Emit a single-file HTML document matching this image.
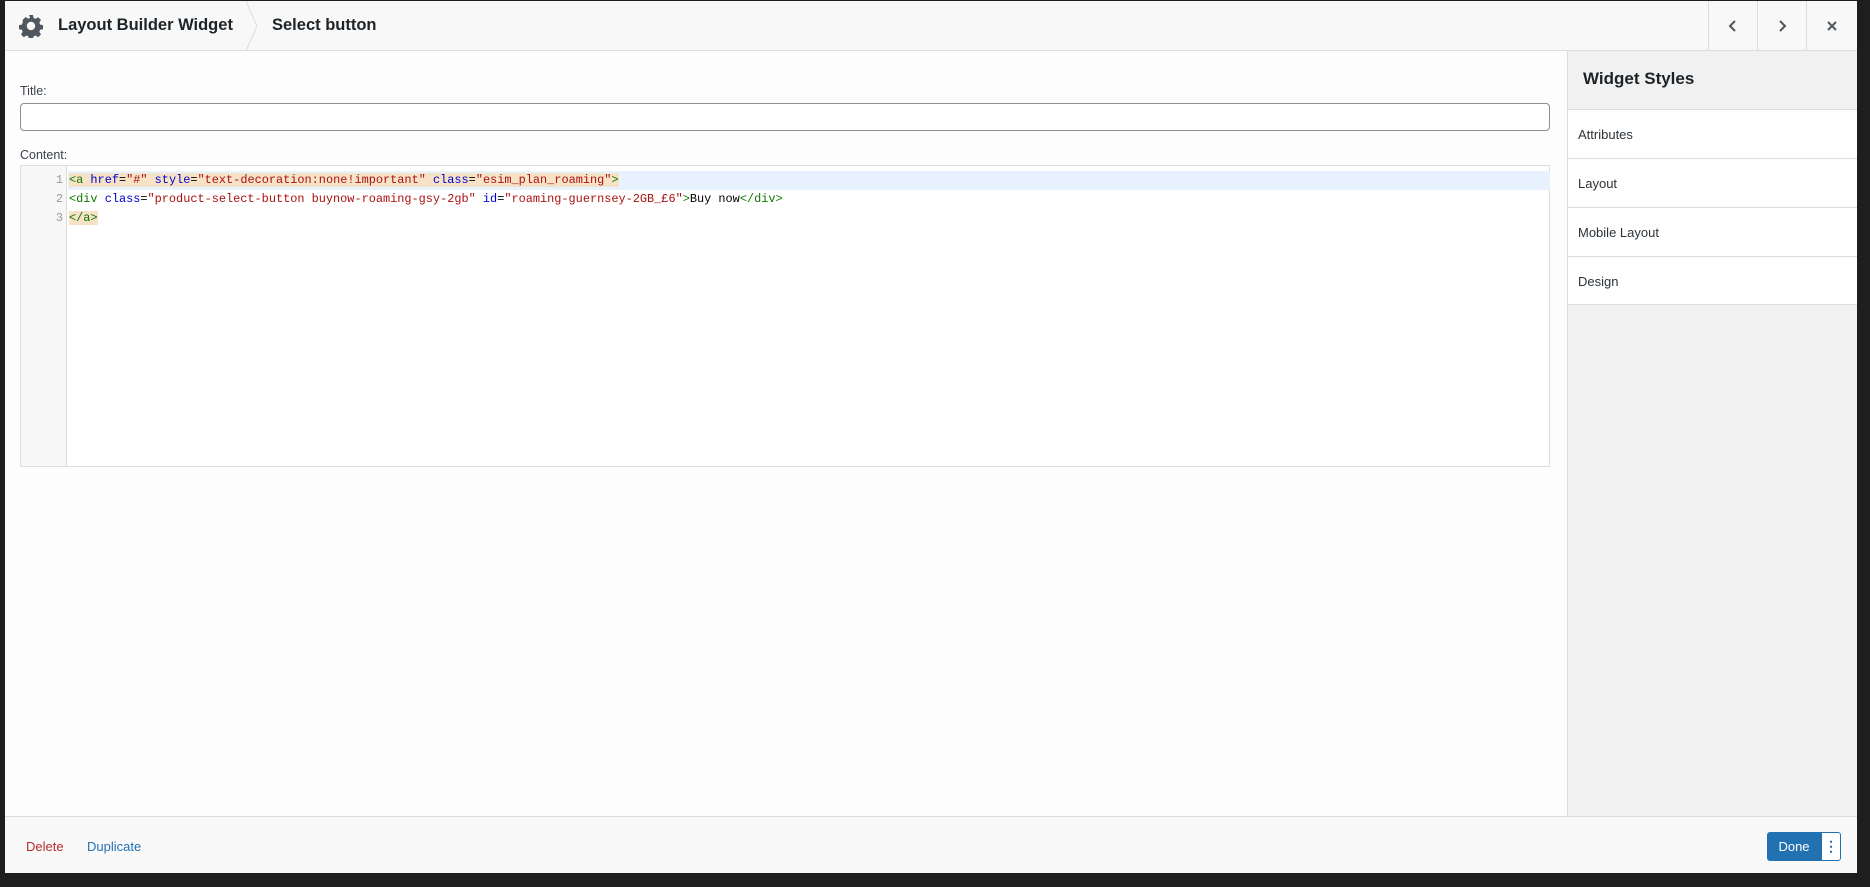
<!DOCTYPE html>
<html><head><meta charset="utf-8"><style>
*{box-sizing:border-box;margin:0;padding:0}
body{width:1870px;height:887px;background:#1e1e1e;position:relative;overflow:hidden;font-family:"Liberation Sans",sans-serif;color:#1d2327}
.modal{position:absolute;left:5px;top:1px;width:1852px;height:872px;background:#fdfdfd}
.hdr{position:absolute;left:0;top:0;width:100%;height:50px;background:#f8f8f8;border-bottom:1px solid #dcdcde}
.hdr .t1{position:absolute;left:53px;top:15px;font-size:16.5px;font-weight:600}
.hdr .t2{position:absolute;left:267px;top:15px;font-size:16.5px;font-weight:600}
.nb{position:absolute;top:0;height:50px;width:49px;border-left:1px solid #dcdcde;display:flex;align-items:center;justify-content:center}
.main{position:absolute;left:0;top:50px;width:1562px;height:765px}
.lbl{position:absolute;left:15px;font-size:12.5px;color:#3c434a}
.inp{position:absolute;left:15px;top:52px;width:1530px;height:28px;border:1px solid #8c8f94;border-radius:4px;background:#fff}
.code{position:absolute;left:15px;top:114px;width:1530px;height:302px;border:1px solid #ddd;background:#fff}
.gut{position:absolute;left:0;top:0;width:46px;height:100%;background:#f7f7f7;border-right:1px solid #ddd}
.ln{position:absolute;left:0;width:42px;text-align:right;font:11.9px "Liberation Mono",monospace;color:#999}
.cl{position:absolute;left:48px;font:11.9px/19px "Liberation Mono",monospace;white-space:pre;color:#000}
.tg{color:#170}.at{color:#00c}.st{color:#a11}
.hl{background:#f6e3c7}
.side{position:absolute;left:1562px;top:50px;width:290px;height:765px;background:#f1f1f1;border-left:1px solid #dcdcde}
.side .h{height:58px;padding:18px 0 0 15px;font-size:17px;font-weight:600}
.it{height:49px;background:#fff;border-top:1px solid #dcdcde;font-size:13px;padding:17px 0 0 10px;color:#2c3338}
.ft{position:absolute;left:0;top:815px;width:100%;height:57px;background:#f9f9f9;border-top:1px solid #dcdcde}
</style></head><body>
<div class="modal">
 <div class="hdr">
  <svg style="position:absolute;left:14px;top:13px" width="24" height="24" viewBox="0 0 24 24"><path fill="#50575e" d="M10 1h4l.6 3 2 .9 2.6-1.7 2.8 2.8-1.7 2.6.9 2 3 .6v4l-3 .6-.9 2 1.7 2.6-2.8 2.8-2.6-1.7-2 .9-.6 3h-4l-.6-3-2-.9-2.6 1.7-2.8-2.8 1.7-2.6-.9-2-3-.6v-4l3-.6.9-2L3.8 5.8 6.6 3l2.6 1.7 2-.9z"/><circle cx="12" cy="12" r="4.2" fill="#f8f8f8"/></svg>
  <div class="t1">Layout Builder Widget</div>
  <svg style="position:absolute;left:240px;top:0" width="14" height="50"><path d="M1 0 L12 25 L1 50" fill="none" stroke="#dcdcde"/></svg>
  <div class="t2">Select button</div>
  <div class="nb" style="left:1703px"><svg width="12" height="14"><path d="M8 2 L3 7 L8 12" fill="none" stroke="#50575e" stroke-width="2"/></svg></div>
  <div class="nb" style="left:1752px"><svg width="12" height="14"><path d="M4 2 L9 7 L4 12" fill="none" stroke="#50575e" stroke-width="2"/></svg></div>
  <div class="nb" style="left:1801px;width:51px"><svg width="12" height="12"><path d="M2 2 L10 10 M10 2 L2 10" stroke="#50575e" stroke-width="2"/></svg></div>
 </div>
 <div class="main">
  <div class="lbl" style="top:33px">Title:</div>
  <div class="inp"></div>
  <div class="lbl" style="top:97px">Content:</div>
  <div class="code">
   <div class="gut"></div>
   <div style="position:absolute;left:47px;top:5px;width:1482px;height:19px;background:#e8f2ff"></div>
   <div class="ln" style="top:7px">1</div><div class="ln" style="top:26px">2</div><div class="ln" style="top:45px">3</div>
   <div class="cl" style="top:5px"><span class="hl"><span class="tg">&lt;a</span> <span class="at">href</span>=<span class="st">"#"</span> <span class="at">style</span>=<span class="st">"text-decoration:none!important"</span> <span class="at">class</span>=<span class="st">"esim_plan_roaming"</span><span class="tg">&gt;</span></span></div>
   <div class="cl" style="top:24px"><span class="tg">&lt;div</span> <span class="at">class</span>=<span class="st">"product-select-button buynow-roaming-gsy-2gb"</span> <span class="at">id</span>=<span class="st">"roaming-guernsey-2GB_£6"</span><span class="tg">&gt;</span>Buy now<span class="tg">&lt;/div&gt;</span></div>
   <div class="cl" style="top:43px"><span class="hl"><span class="tg">&lt;/a&gt;</span></span></div>
  </div>
 </div>
 <div class="side">
  <div class="h">Widget Styles</div>
  <div class="it">Attributes</div><div class="it">Layout</div><div class="it">Mobile Layout</div><div class="it" style="border-bottom:1px solid #dcdcde">Design</div>
 </div>
 <div class="ft">
  <div style="position:absolute;left:21px;top:22px;font-size:13px;color:#b32d2e">Delete</div>
  <div style="position:absolute;left:82px;top:22px;font-size:13px;color:#2271b1">Duplicate</div>
  <div style="position:absolute;left:1762px;top:15px;width:54px;height:29px;background:#2271b1;border-radius:3px 0 0 3px;color:#fff;font-size:13px;text-align:center;line-height:29px">Done</div>
  <div style="position:absolute;left:1816px;top:15px;width:20px;height:29px;background:#fff;border:1px solid #2271b1;border-radius:0 3px 3px 0;color:#2271b1;text-align:center;line-height:26px;font-size:14px;font-weight:bold">⋮</div>
 </div>
</div>
</body></html>
